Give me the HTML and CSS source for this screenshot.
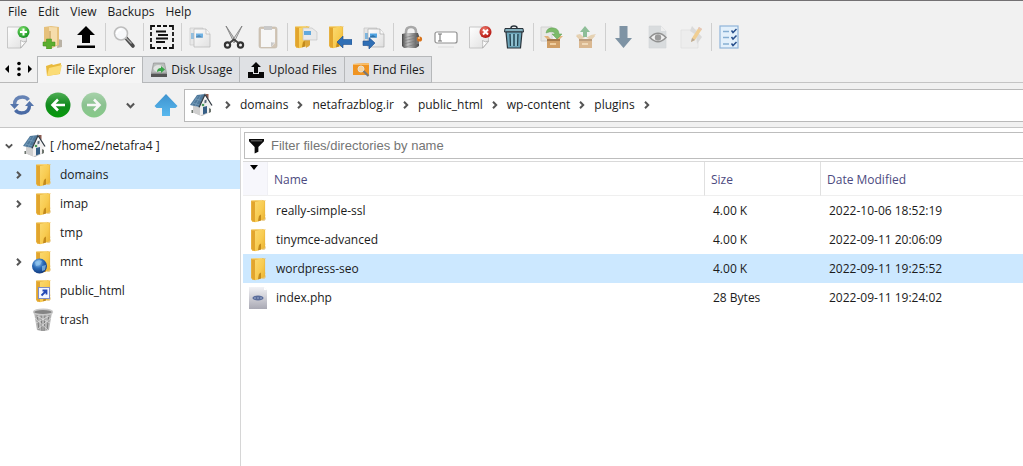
FILE: index.html
```
<!DOCTYPE html>
<html lang="en">
<head>
<meta charset="utf-8">
<title>File Manager</title>
<link rel="stylesheet" href="styles.css">
</head>
<body>
<svg class="sprite" aria-hidden="true">
  <defs>
    <linearGradient id="gold" x1="0" x2="1" y1="0" y2="1"><stop offset="0" stop-color="#fbd96f"/><stop offset=".55" stop-color="#f8cb50"/><stop offset="1" stop-color="#eab02e"/></linearGradient>
    <linearGradient id="green" x1="0" x2="0" y1="0" y2="1"><stop offset="0" stop-color="#4fae55"/><stop offset=".5" stop-color="#128a1e"/><stop offset="1" stop-color="#069b0a"/></linearGradient>
    <linearGradient id="sky" x1="0" x2="0" y1="0" y2="1"><stop offset="0" stop-color="#3f93cf"/><stop offset="1" stop-color="#58b8ee"/></linearGradient>
    <linearGradient id="metal" x1="0" x2="1" y1="0" y2="0"><stop offset="0" stop-color="#444"/><stop offset=".35" stop-color="#c4c4c4"/><stop offset="1" stop-color="#4a4a4a"/></linearGradient>
    <linearGradient id="sheet" x1="0" x2="1" y1="0" y2="1"><stop offset="0" stop-color="#fff"/><stop offset="1" stop-color="#dedede"/></linearGradient>
    <linearGradient id="grey" x1="0" x2="0" y1="0" y2="1"><stop offset="0" stop-color="#f2f2f5"/><stop offset="1" stop-color="#a9a9b4"/></linearGradient>
    <radialGradient id="globe" cx=".4" cy=".3" r=".7"><stop offset="0" stop-color="#9fcdf5"/><stop offset=".5" stop-color="#2b6cb8"/><stop offset="1" stop-color="#123a80"/></radialGradient>
    <radialGradient id="lime" cx=".4" cy=".3" r=".7"><stop offset="0" stop-color="#7fe06b"/><stop offset="1" stop-color="#159322"/></radialGradient>
    <radialGradient id="red" cx=".4" cy=".3" r=".7"><stop offset="0" stop-color="#ee7a6c"/><stop offset="1" stop-color="#b3130e"/></radialGradient>
  </defs>
  <symbol id="folder" viewBox="0 0 24 24">
    <path d="M17 14.500q3.500.5 1.800 3.300 2 2-.3 4H16z" fill="#e6c47c"/>
    <path d="M5 1.500L15.500 1l5.500.8-.3.200H20v17l-4.500 2.500-9 1.500L5 21z" fill="#eab43c" transform="translate(.5 0) scale(.93 1)"/>
    <path d="M5.500 2l3.500.8v20.400L5.500 21z" fill="#e2a52d"/>
    <path d="M9 3l6.500-1.500L18.500 2v18L15 21.500v-6l-2 1.500-1 5.500-3 .7z" fill="url(#gold)"/>
    <path d="M12 22.500l1-5.500 2-1.500v6z" fill="#c28a1c"/>
    <path d="M6 1.800L16 1.400" stroke="#f7dc8c" stroke-width=".8"/>
  </symbol>
  <symbol id="house" viewBox="0 0 24 24">
    <path d="M3 19l10 4 8-4-4-2z" fill="#b9b9b9"/><path d="M4 12l7 3v7.500l-7-3z" fill="#cfcfcf"/>
    <path d="M11 14l5-9 6 7-1 7-10 3.500z" fill="#f1efef"/>
    <path d="M17 3.500V1h2.500v5z" fill="#8b5d52"/><path d="M1 12L8 2l8-1-6 13z" fill="#50799b"/>
    <path d="M3 12l6-9M6 13l6-11M3.500 10l7.500 2M6 6l7 1.500" stroke="#7fa6c3" stroke-width=".6"/>
    <path d="M10 14.500l6-13 7 11" fill="none" stroke="#333c45" stroke-width="1.300"/><path d="M14 14l4-1v7l-4 1.500z" fill="#365f86"/>
    <path d="M15.500 7.500l2-1v3l-2 1z" fill="#567"/><circle cx="14" cy="12" r="1.300" fill="#4a9b58"/>
    <path d="M2.500 17h1.500v3H2.500zM20 15l2 1v3l-2 1z" fill="#6d756e"/>
  </symbol>
  <symbol id="chev" viewBox="0 0 8 8"><path d="M2 .8L5.200 4 2 7.200" fill="none" stroke="#555" stroke-width="2"/></symbol>
  <symbol id="chev-down" viewBox="0 0 8 8"><path d="M.8 2.300L4 5.500l3.200-3.200" fill="none" stroke="#555" stroke-width="1.900"/></symbol>
  <symbol id="page" viewBox="0 0 24 24"><path d="M1.500 2h19v14.500L15 23H1.500z" fill="url(#sheet)" stroke="#bcbcbc" stroke-width=".8"/><path d="M20.500 16q-3 2-6-.5.500 4 0 7.500z" fill="#fff" stroke="#aaa" stroke-width=".7"/></symbol>
  <symbol id="docs" viewBox="0 0 24 24"><path d="M2 3h13v17H2z" fill="#e6e6e6" stroke="#c0c0c0" stroke-width=".7"/><path d="M3 8h4v6H3z" fill="#7bb4de"/><path d="M6 4h12l4 5v13H6z" fill="url(#sheet)" stroke="#aaa" stroke-width=".7"/><path d="M18 4v5h4" fill="#fafafa" stroke="#aaa" stroke-width=".7"/><path d="M8 8.500h7v4H8z" fill="#4fa3e2"/><path d="M8 11.500l3-1.500 4 2.500H8z" fill="#2f72a8"/></symbol>
  <symbol id="box" viewBox="0 0 24 24"><path d="M7 14h13v9H7z" fill="#c88a43"/><path d="M7 14l-3-3h4l3 3zM20 14l3-3h-4l-3 3z" fill="#dfa55f"/><path d="M7 14h13v2H7z" fill="#925c21"/><path d="M10 18h6v2h-6z" fill="#efc68d"/></symbol>
</svg>

<nav class="menubar" aria-label="Menu">
  <button>File</button><button>Edit</button><button>View</button><button>Backups</button><button>Help</button>
</nav>

<div class="toolbar" role="toolbar" aria-label="File actions">
  <button aria-label="New file"><svg viewBox="0 0 24 24"><use href="#page"/><circle cx="17.500" cy="7" r="6" fill="url(#lime)"/><path d="M17.500 3.500v7M14 7h7" stroke="#fff" stroke-width="2"/></svg></button>
  <button aria-label="New folder"><svg viewBox="0 0 24 24"><path d="M18 14l4 1v7l-5 1z" fill="#b9b2a5"/><path d="M4 2l7-1 8 1v18l-7 3-8-2z" fill="#e6c17c"/><path d="M9 2l8 .5V20l-5 2-3-2z" fill="#f5dcab"/><path d="M10 6v10" stroke="#bb914a"/><path d="M6.500 14h5v3h3.500v4h-3.500v3h-5v-3H3v-4h3.500z" fill="#5cae2f" stroke="#3f8d1e" stroke-width=".5"/></svg></button>
  <button aria-label="Go up"><svg viewBox="0 0 24 24"><path d="M12 1l9 9h-5v8H8v-8H3zM3 20.500h18V23H3z" fill="#000"/></svg></button>
  <span class="sep"></span>
  <button aria-label="Search"><svg viewBox="0 0 24 24"><path d="M14 13l7 8" stroke="#4a4a4a" stroke-width="3.600" stroke-linecap="round"/><path d="M13.500 12.500l6 6" stroke="#aaa" stroke-width="1.200"/><circle cx="9" cy="8.500" r="6.500" fill="#f7f8fa" stroke="#bdbdbd" stroke-width="1.600"/><path d="M4.500 9q.5-4 5-4.500" fill="none" stroke="#fff" stroke-width="2"/></svg></button>
  <span class="sep"></span>
  <button aria-label="Select all"><svg viewBox="0 0 24 24"><path d="M1 5V1h4M19 1h4v4M23 19v4h-4M5 23H1v-4" fill="none" stroke="#111" stroke-width="1.800"/><path d="M7 1h10M7 23h10M1 7v10M23 7v10" stroke="#111" stroke-width="1.800" stroke-dasharray="4 2"/><path d="M6 6.500h10M8 10h10M6 13.500h12M6 17h9" stroke="#111" stroke-width="1.800"/></svg></button>
  <span class="sep"></span>
  <button class="mid" aria-label="Copy"><svg viewBox="0 0 24 24"><use href="#docs"/></svg></button>
  <button aria-label="Cut"><svg viewBox="0 0 24 24"><path d="M4 1l10 15-2 1.500z" fill="#ccc" stroke="#777" stroke-width=".8"/><path d="M20 1L10 16l2 1.500z" fill="#e2e2e2" stroke="#777" stroke-width=".8"/><circle cx="5.500" cy="20" r="2.600" fill="none" stroke="#333" stroke-width="2.200"/><circle cx="18.500" cy="20" r="2.600" fill="none" stroke="#333" stroke-width="2.200"/><path d="M7.500 18l4.500-3.500 4.500 3.500" fill="none" stroke="#444" stroke-width="1.800"/></svg></button>
  <button class="dim" aria-label="Paste"><svg viewBox="0 0 24 24"><rect x="3" y="2" width="18" height="21" rx="2" fill="#b9a488" stroke="#98866c" stroke-width=".6"/><path d="M5 4h14v14l-4 4H5z" fill="#fbfbfb"/><path d="M19 17q-2 1-4 0v5z" fill="#aaa"/><path d="M8 1h8v4H8z" fill="#aaa"/></svg></button>
  <span class="sep"></span>
  <button aria-label="Copy to folder"><svg viewBox="0 0 24 24"><use href="#folder" x="-4"/><path d="M10 13h6v7l-4 3z" fill="#dca638"/><path d="M9 3h9l5 4v8H9z" fill="#e9e9e9" stroke="#c4c4c4" stroke-width=".7"/><path d="M10 6h7v4h-7z" fill="#61a8dc"/></svg></button>
  <button aria-label="Move to folder"><svg viewBox="0 0 24 24"><use href="#folder" x="-4"/><path d="M9 17l6-6v3.500h9v5h-9V23z" fill="#2f6fb5" stroke="#1e4f8e" stroke-width=".6"/></svg></button>
  <button aria-label="Move file"><svg viewBox="0 0 24 24"><use href="#docs"/><path d="M13 18l-6-5.500v3.500H1v4.500h6V24z" fill="#2f6fb5" stroke="#1e4f8e" stroke-width=".6"/></svg></button>
  <span class="sep"></span>
  <button aria-label="Permissions"><svg viewBox="0 0 24 24"><path d="M6 11V7q0-5 5-5t5 5v4" fill="none" stroke="#a8a8a8" stroke-width="2.600"/><path d="M2 9l4-1h12l1 3v10l-3 2H4l-2-2z" fill="url(#metal)"/><path d="M3 13l13-3M3 16l13-3M3 19l13-3M5 22l12-3" stroke="#777" stroke-width=".6"/><path d="M16 12h3v7h-3z" fill="#777"/><circle cx="19.500" cy="14" r="2.600" fill="#d8731b"/><circle cx="19" cy="13" r="1" fill="#ffc782"/></svg></button>
  <button aria-label="Rename"><svg viewBox="0 0 24 24"><rect x="1" y="7" width="22" height="11" rx="2" fill="#fff" stroke="#8f8f8f" stroke-width="1.200"/><path d="M4 9h4M6 9v7M4 16h4" stroke="#777" stroke-width="1.100"/><path d="M4 22h16" stroke="#ddd"/></svg></button>
  <button aria-label="Delete file"><svg viewBox="0 0 24 24"><use href="#page"/><circle cx="17.500" cy="7" r="6" fill="url(#red)"/><path d="M15 4.500l5 5M20 4.500l-5 5" stroke="#fff" stroke-width="2"/></svg></button>
  <button aria-label="Trash"><svg viewBox="0 0 24 24"><path d="M9 3q0-2 3-2t3 2" fill="none" stroke="#29333b" stroke-width="1.500"/><path d="M3 3.500h18l.5 3.500h-19z" fill="#83afbd" stroke="#29333b"/><path d="M4 7h16l-1.500 16h-13z" fill="#6da6ba" stroke="#29333b" stroke-width="1.200"/><path d="M8 9l.5 12M12 9v12M16 9l-.5 12" stroke="#25424f" stroke-width="1.300"/><path d="M10 9v12M14 9v12" stroke="#b3dbe6"/></svg></button>
  <span class="sep"></span>
  <button class="mid" aria-label="Extract"><svg viewBox="0 0 24 24"><path d="M1 2h11v14H1z" fill="#e6e6e3" stroke="#ccc"/><use href="#box"/><path d="M6 8q1-6 8-5 5 1 5 6h3l-5 5-5-5h3q-1-4-9-1z" fill="#5fae48" stroke="#418c33" stroke-width=".5"/></svg></button>
  <button class="dim" aria-label="Compress"><svg viewBox="0 0 24 24"><use href="#box" x="-2"/><path d="M2 10l4-1 5 4-5 1zM22 9l-5 1-5 3 6 1z" fill="#ddb982"/><path d="M11 1l5 6h-3v5H9V7H6z" fill="#3f9650"/></svg></button>
  <span class="sep"></span>
  <button class="mid" aria-label="Download"><svg viewBox="0 0 24 24"><path d="M7.500 1h8v12H20l-8.500 10L3 13h4.500z" fill="#627c91"/></svg></button>
  <button class="dim" aria-label="View"><svg viewBox="0 0 24 24"><path d="M3 1h12l5 5v17H3z" fill="#c6cccf" stroke="#b9bfc2" stroke-width=".6"/><path d="M15 1v5h5" fill="#eee"/><path d="M4 12.500q8-8.500 16 0-8 8.500-16 0z" fill="#f0f0f0" stroke="#444" stroke-width="1.500"/><circle cx="12" cy="12.500" r="3.200" fill="#555"/></svg></button>
  <button class="dim" aria-label="Edit"><svg viewBox="0 0 24 24"><path d="M1 5h17v18H1z" fill="#ebebeb" stroke="#ccc" stroke-width=".6"/><path d="M12 1l10 11-5 7-1-9-6-4z" fill="#c9c9c9"/><path d="M11 17l1-4 7-11 3 2-7 11z" fill="#f0b246"/><path d="M11 17l1-4 3 2z" fill="#8a6f4e"/><path d="M19 2l3 2-1 1.500-3-2z" fill="#dba28f"/></svg></button>
  <span class="sep"></span>
  <button aria-label="Preferences"><svg viewBox="0 0 24 24"><rect x="2" y="1" width="18" height="22" fill="#e3f0fb" stroke="#8fb4d9" stroke-width="1.200"/><path d="M5 6.500h6M5 12.500h6M5 19h6" stroke="#86aed2" stroke-width="1.400"/><path d="M13.500 5.500l1.500 2L18.500 4M13.500 12l1.500 2 3.500-3.500M13.500 18.500l1.500 2 3.500-3.500" fill="none" stroke="#284f8c" stroke-width="1.500"/></svg></button>
</div>

<div class="tabs">
  <div class="tab-scroll">
    <button aria-label="Previous tab"><svg viewBox="0 0 6 8"><path d="M5 0v8L1 4z"/></svg></button>
    <button aria-label="Tab list"><svg viewBox="0 0 6 16"><circle cx="3" cy="2.500" r="1.800"/><circle cx="3" cy="8" r="1.800"/><circle cx="3" cy="13.500" r="1.800"/></svg></button>
    <button aria-label="Next tab"><svg viewBox="0 0 6 8"><path d="M1 0v8l4-4z"/></svg></button>
  </div>
  <div class="tablist" role="tablist">
    <button class="tab active" role="tab" aria-selected="true"><svg viewBox="0 0 18 18"><path d="M1 5l6-2 1 1 8-2-1 11-13 2z" fill="#e8b93c"/><path d="M4 7l13-3-2.500 9L2 15z" fill="#fbdc76"/></svg>File Explorer</button>
    <button class="tab" role="tab" aria-selected="false"><svg viewBox="0 0 18 18"><path d="M3.500 2h11L16.500 12h-15z" fill="#b9bdbb" stroke="#888" stroke-width=".6"/><path d="M1 12.500h16V16H1z" fill="#555"/><ellipse cx="8.500" cy="7.500" rx="5" ry="3.500" fill="#e0e3e1"/><path d="M7 11q0-4 4-4V5l4 3.500-4 3.500v-2q-2 0-4 1z" fill="#38a448"/></svg>Disk Usage</button>
    <button class="tab" role="tab" aria-selected="false"><svg viewBox="0 0 18 18"><path d="M9 1l5 5h-3v6H7V6H4zM1 11h5v2h6v-2h5v6H1z" fill="#080808"/></svg>Upload Files</button>
    <button class="tab" role="tab" aria-selected="false"><svg viewBox="0 0 18 18"><path d="M1 3l16-1v12H1z" fill="#ef9422"/><path d="M1 3l16-1v2H1z" fill="#f9be69"/><circle cx="9" cy="8" r="3" fill="#f8d39c" stroke="#e3e0da"/><path d="M11.500 10l5 5" stroke="#777" stroke-width="2.200"/></svg>Find Files</button>
  </div>
</div>

<div class="navbar">
  <button class="nav refresh" aria-label="Refresh"><svg viewBox="0 0 24 24"><path d="M4.500 12q0-8 8-8 4 0 6 3" fill="none" stroke="#6683b5" stroke-width="3.400"/><path d="M19.500 12q0 8-8 8-4 0-6-3" fill="none" stroke="#4a6ba5" stroke-width="3.400"/><path d="M0 11h9l-4.500 5zM15 13h9l-4.500-5z" fill="#5575ab"/></svg></button>
  <button class="nav back" aria-label="Back"><svg viewBox="0 0 26 26"><circle cx="13" cy="13" r="12.500" fill="url(#green)"/><path d="M20 13H8M13 7.500L7.500 13l5.500 5.500" fill="none" stroke="#fff" stroke-width="2.600"/></svg></button>
  <button class="nav forward" aria-label="Forward"><svg viewBox="0 0 26 26"><circle cx="13" cy="13" r="12.500" fill="url(#green)"/><path d="M6 13h12M13 7.500l5.500 5.500-5.500 5.500" fill="none" stroke="#fff" stroke-width="2.600"/></svg></button>
  <button class="nav history" aria-label="History"><svg viewBox="0 0 8 8"><use href="#chev-down"/></svg></button>
  <button class="nav up" aria-label="Parent directory"><svg viewBox="0 0 24 24"><path d="M12 1l11.500 12-2 2H16v8H8v-8H2.500l-2-2z" fill="url(#sky)"/></svg></button>
  <div class="path">
    <button class="home" aria-label="Home"><svg viewBox="0 0 24 24"><use href="#house"/></svg></button>
    <svg class="chev"><use href="#chev"/></svg>
    <button>domains</button><svg class="chev"><use href="#chev"/></svg>
    <button>netafrazblog.ir</button><svg class="chev"><use href="#chev"/></svg>
    <button>public_html</button><svg class="chev"><use href="#chev"/></svg>
    <button>wp-content</button><svg class="chev"><use href="#chev"/></svg>
    <button>plugins</button><svg class="chev"><use href="#chev"/></svg>
  </div>
</div>

<div class="content">
  <aside class="tree" role="tree" aria-label="Folders">
    <div class="node root" role="treeitem"><svg class="chev"><use href="#chev-down"/></svg><svg class="ico"><use href="#house"/></svg><span>[ /home2/netafra4 ]</span></div>
    <div class="node selected" role="treeitem"><svg class="chev"><use href="#chev"/></svg><svg class="ico"><use href="#folder"/></svg><span>domains</span></div>
    <div class="node" role="treeitem"><svg class="chev"><use href="#chev"/></svg><svg class="ico"><use href="#folder"/></svg><span>imap</span></div>
    <div class="node" role="treeitem"><svg class="chev"></svg><svg class="ico"><use href="#folder"/></svg><span>tmp</span></div>
    <div class="node" role="treeitem"><svg class="chev"><use href="#chev"/></svg><svg class="ico" viewBox="0 0 24 24"><use href="#folder"/><circle cx="8.500" cy="16" r="7.500" fill="url(#globe)"/><path d="M4 12l4-2 3 1-2 4-4 1zM11 16l4-1-1 5-3 1z" fill="#8ec4ed" opacity=".7"/></svg><span>mnt</span></div>
    <div class="node" role="treeitem"><svg class="chev"></svg><svg class="ico" viewBox="0 0 24 24"><use href="#folder"/><rect x="7.500" y="8.500" width="11" height="11" fill="#f4f6ff" stroke="#7d8cc6"/><path d="M10.500 16.500l4-4M11.500 11.500h4v4" fill="none" stroke="#2348b5" stroke-width="1.800"/></svg><span>public_html</span></div>
    <div class="node" role="treeitem"><svg class="chev"></svg><svg class="ico" viewBox="0 0 24 24"><path d="M3 4l3 18q6 2 12 0l3-18z" fill="#b4b4b4"/><path d="M6 6l2 16M10 6l1 17M14 6l-1 17M18 6l-2 16" stroke="#7d7d7d"/><path d="M4 10l13 12M5 15l13-7M20 10L7 21M19 15L6 8" stroke="#ddd" stroke-width=".8"/><ellipse cx="12" cy="4" rx="9.500" ry="2.800" fill="#848484" stroke="#c9c9c9" stroke-width="1.400"/></svg><span>trash</span></div>
  </aside>
  <main class="files">
    <label class="filter"><svg viewBox="0 0 16 16" aria-hidden="true"><path d="M0 .5h16V3l-6 6v5l-4 2V9L0 3z" fill="#0a0a0a"/><path d="M2 2.500h12" fill="none" stroke="#999" stroke-width=".8"/></svg><input type="text" aria-label="Filter files" placeholder="Filter files/directories by name"></label>
    <table>
      <colgroup><col class="c-icon"><col><col class="c-size"><col class="c-date"></colgroup>
      <thead><tr><th class="sort" aria-label="Type"><svg viewBox="0 0 8 5"><path d="M0 0h8L4 5z"/></svg></th><th>Name</th><th>Size</th><th>Date Modified</th></tr></thead>
      <tbody>
        <tr><td><svg class="ico"><use href="#folder"/></svg></td><td>really-simple-ssl</td><td>4.00 K</td><td>2022-10-06 18:52:19</td></tr>
        <tr><td><svg class="ico"><use href="#folder"/></svg></td><td>tinymce-advanced</td><td>4.00 K</td><td>2022-09-11 20:06:09</td></tr>
        <tr class="selected"><td><svg class="ico"><use href="#folder"/></svg></td><td>wordpress-seo</td><td>4.00 K</td><td>2022-09-11 19:25:52</td></tr>
        <tr><td><svg class="ico" viewBox="0 0 24 24"><path d="M3 1h15l3 3v19H3z" fill="url(#grey)"/><path d="M18 1v3h3" fill="#fff"/><ellipse cx="12" cy="12" rx="5.500" ry="2.600" fill="#5a6c9a"/><path d="M8 12h8" stroke="#8796bd" stroke-width="1.500" stroke-dasharray="2 1"/></svg></td><td>index.php</td><td>28 Bytes</td><td>2022-09-11 19:24:02</td></tr>
      </tbody>
    </table>
  </main>
</div>
</body>
</html>
```
FILE: styles.css
```
* { box-sizing: border-box; }
body {
  margin: 0;
  min-height: 100vh;
  display: flex;
  flex-direction: column;
  background: #f1f1f1;
  border-top: 1px solid #737173;
  color: #1b1b1b;
  font: 12px/16px "Open Sans", "Noto Sans", sans-serif;
}
button { border: 0; padding: 0; background: none; color: inherit; font: inherit; }
svg { display: block; flex: none; }
.sprite { position: absolute; width: 0; height: 0; }

.menubar { display: flex; gap: 11px; height: 21px; padding: 0 8px; align-items: center; }

.toolbar { display: flex; align-items: center; height: 30px; padding-left: 1px; }
.toolbar button { width: 34px; display: flex; justify-content: center; }
.toolbar svg { width: 24px; height: 24px; }
.sep { width: 4px; height: 28px; display: flex; justify-content: center; }
.sep::before { content: ""; width: 1px; background: #cfcfcf; }
.dim { opacity: .55; }
.mid { opacity: .8; }

.tabs { display: flex; margin-top: 4px; height: 27px; }
.tab-scroll { display: flex; align-items: center; justify-content: space-between; width: 37px; padding: 0 4px; border-bottom: 1px solid #b9b9b9; }
.tab-scroll svg { width: 6px; height: 8px; }
.tab-scroll button:nth-child(2) svg { height: 16px; }
.tablist { flex: 1; display: flex; }
.tablist::after { content: ""; flex: 1; border-bottom: 1px solid #c4c4c4; }
.tab { display: flex; align-items: center; gap: 3px; padding: 0 7px; border: 1px solid #b6b8ba; border-left: 0; background: #dfe1e4; white-space: nowrap; }
.tab svg { width: 18px; height: 18px; }
.tab.active { border-left: 1px solid #b6b8ba; border-bottom: 0; background: #f5f5f5; }

.navbar { display: flex; align-items: center; height: 45px; border-bottom: 1px solid #c6c6c6; padding-left: 10px; }
.nav { width: 24px; margin-right: 12px; display: flex; justify-content: center; }
.refresh svg, .up svg { width: 24px; height: 24px; }
.back svg, .forward svg { width: 26px; height: 26px; }
.forward { opacity: .45; }
.history svg { width: 9px; height: 9px; }
.up { margin-right: 6px; }
.path { flex: 1; display: flex; align-items: center; gap: 8px; height: 33px; padding-left: 4px; border: 1px solid #b9b9b9; border-right: 0; background: #fff; }
.path svg { width: 8px; height: 8px; }
.path .home { margin-right: 3px; }
.path .home svg { width: 24px; height: 24px; }

.content { flex: 1; display: flex; background: #fff; }
.tree { width: 241px; padding-top: 3px; border-right: 1px solid #d6d6d6; }
.node { display: flex; align-items: center; height: 29px; padding-left: 15px; }
.node.root { padding-left: 5px; }
.node .chev { width: 8px; height: 8px; margin-right: 8px; }
.node .ico { margin-right: 5px; }
.root .chev { margin-right: 9px; }
.root .ico { margin-right: 4px; }
.ico { width: 24px; height: 24px; }
.selected { background: #cce8ff; }

.files { flex: 1; padding: 4px 0 0 2px; }
.filter { display: flex; align-items: center; gap: 7px; height: 27px; margin: 0 0 2px 1px; padding-left: 4px; border: 1px solid #bdbdbd; border-right: 0; }
.filter svg { width: 15px; height: 16px; }
.filter input { flex: 1; border: 0; padding: 0; outline: 0; background: none; font: 13px/16px "Liberation Sans", Arial, sans-serif; }
.filter input::placeholder { color: #757575; opacity: 1; }

table { width: 100%; table-layout: fixed; border-collapse: separate; border-spacing: 0; border-top: 1px solid #d9d9d9; }
.c-icon { width: 24px; }
.c-size { width: 116px; }
.c-date { width: 203px; }
th { height: 34px; padding: 2px 6px 0; border-bottom: 1px solid #efefef; border-left: 1px solid #e0e0e0; color: #4c4a80; font-weight: 400; text-align: left; }
th:nth-child(2) { border-left-color: #f0f0f5; }
.sort { padding: 3px 0 0 7px; border-left: 0; background: #f7f7fc; vertical-align: top; }
.sort svg { width: 8px; height: 5px; }
td { height: 29px; padding: 0 0 0 9px; }
td:first-child { padding: 0 0 0 3px; }
```
